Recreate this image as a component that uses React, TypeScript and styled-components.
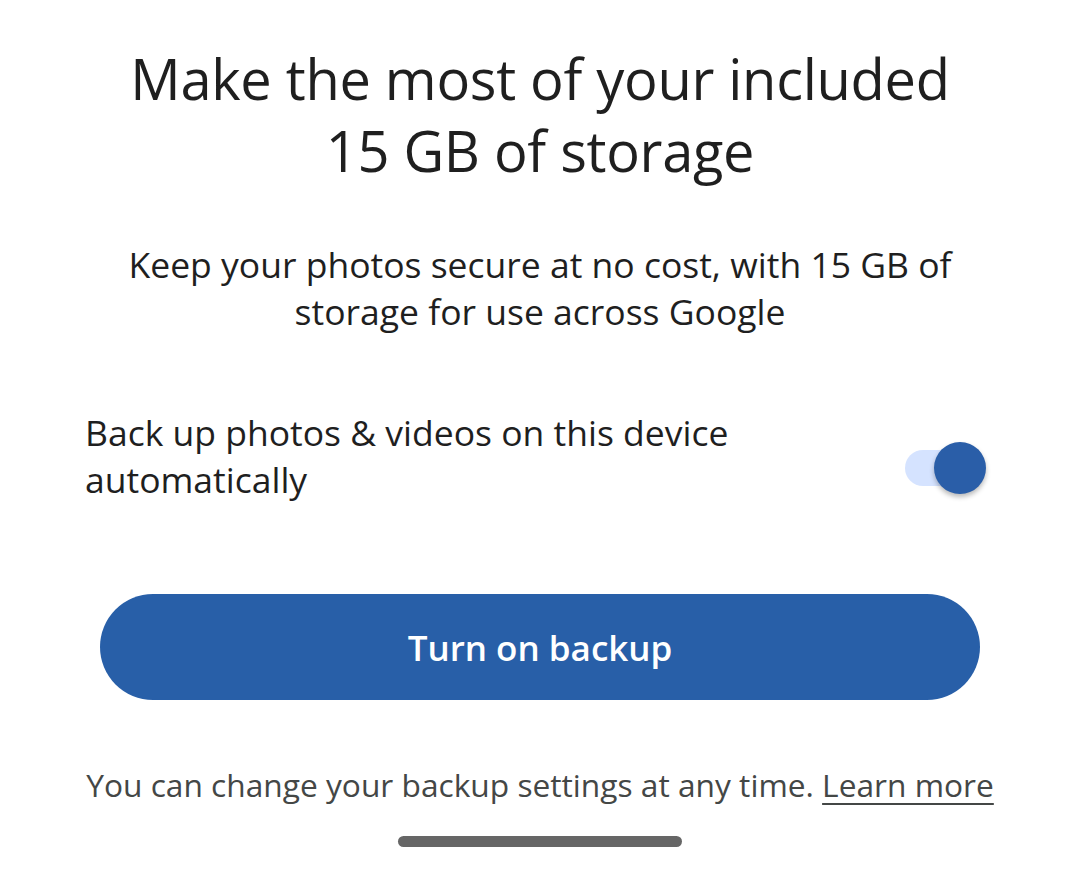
import React, { useState } from 'react';
import styled, { createGlobalStyle } from 'styled-components';

const GlobalStyle = createGlobalStyle`
	html, body {
		margin: 0;
		padding: 0;
		background: #ffffff;
	}

	body {
		font-family: 'Open Sans', 'Noto Sans', sans-serif;
		color: #1f1f1f;
		-webkit-font-smoothing: antialiased;
	}
`;

const Screen = styled.div`
	width: 1080px;
	height: 872px;
	box-sizing: border-box;
	display: flex;
	flex-direction: column;
	align-items: center;
	padding-top: 42px;
	overflow: hidden;
`;

const Title = styled.h1`
	margin: 0;
	font-size: 56px;
	font-weight: 400;
	line-height: 72px;
	text-align: center;
	letter-spacing: -0.3px;
	color: #1f1f1f;
`;

const Subtitle = styled.p`
	margin: 55px 0 0;
	font-size: 35.5px;
	line-height: 47px;
	text-align: center;
	color: #1f1f1f;
	max-width: 880px;
`;

const OptionRow = styled.label`
	align-self: stretch;
	display: flex;
	align-items: center;
	justify-content: space-between;
	margin: 74px 0 0;
	padding: 0 111px 0 85px;
	cursor: pointer;
`;

const OptionText = styled.span`
	font-size: 35.5px;
	line-height: 47px;
	color: #1f1f1f;
	max-width: 700px;
`;

const Track = styled.span<{ $on: boolean }>`
	position: relative;
	display: inline-block;
	width: 64px;
	height: 36px;
	margin-top: 24px;
	border-radius: 18px;
	background: ${p => (p.$on ? '#d5e3ff' : '#e0e0e0')};
	flex-shrink: 0;
`;

const Thumb = styled.span<{ $on: boolean }>`
	position: absolute;
	top: 50%;
	left: ${p => (p.$on ? '29px' : '-18px')};
	width: 52px;
	height: 52px;
	margin-top: -26px;
	border-radius: 50%;
	background: ${p => (p.$on ? '#2a5ea8' : '#f5f5f5')};
	box-shadow: 0 3px 5px rgba(0, 0, 0, 0.28);
`;

const PrimaryButton = styled.button`
	margin-top: 91px;
	width: 880px;
	height: 106px;
	border: none;
	border-radius: 53px;
	background: #285fa8;
	color: #ffffff;
	font-family: inherit;
	font-size: 35px;
	font-weight: 600;
	cursor: pointer;
`;

const Footnote = styled.p`
	margin: 65px 0 0;
	font-size: 31.7px;
	line-height: 40px;
	color: #444746;
	text-align: center;
	white-space: nowrap;
`;

const LearnMore = styled.a`
	color: #444746;
	text-decoration: underline;
	text-underline-offset: 6px;
	text-decoration-thickness: 2px;
`;

const HomeIndicator = styled.div`
	margin-top: 31px;
	width: 284px;
	height: 11px;
	border-radius: 6px;
	background: #666666;
`;

export default function App() {
	const [backup, setBackup] = useState(true);

	return (
		<>
			<GlobalStyle />
			<Screen>
				<Title>
					Make the most of your included
					<br />
					15 GB of storage
				</Title>
				<Subtitle>
					Keep your photos secure at no cost, with 15 GB of
					<br />
					storage for use across Google
				</Subtitle>
				<OptionRow onClick={() => setBackup(v => !v)}>
					<OptionText>
						Back up photos &amp; videos on this device
						<br />
						automatically
					</OptionText>
					<Track $on={backup}>
						<Thumb $on={backup} />
					</Track>
				</OptionRow>
				<PrimaryButton>Turn on backup</PrimaryButton>
				<Footnote>
					You can change your backup settings at any time. <LearnMore href="#">Learn more</LearnMore>
				</Footnote>
				<HomeIndicator />
			</Screen>
		</>
	);
}
